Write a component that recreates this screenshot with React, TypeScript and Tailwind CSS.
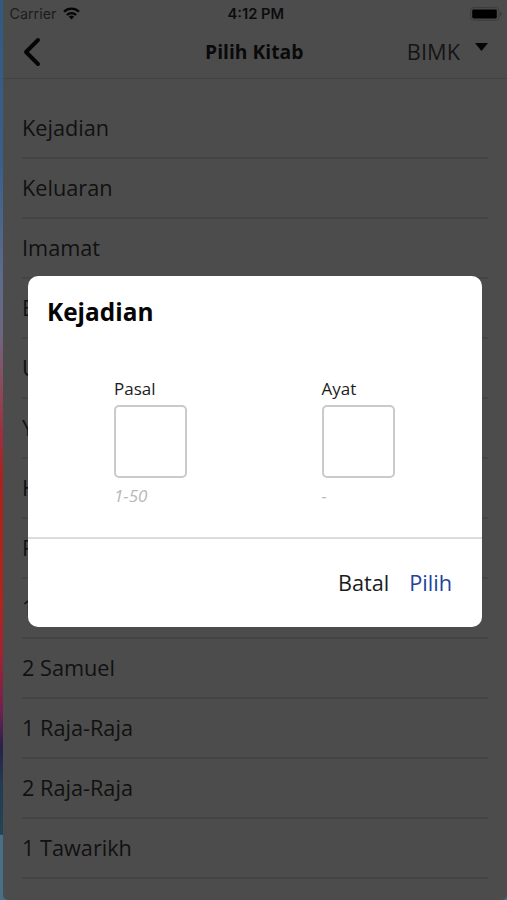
import React from "react";

const books = [
  "Kejadian",
  "Keluaran",
  "Imamat",
  "Bilangan",
  "Ulangan",
  "Yosua",
  "Hakim-Hakim",
  "Rut",
  "1 Samuel",
  "2 Samuel",
  "1 Raja-Raja",
  "2 Raja-Raja",
  "1 Tawarikh",
];

function StatusBar() {
  return (
    <div className="flex h-[27px] items-center justify-between pr-[5px] pl-[7px] font-['Inter',sans-serif] text-[14px] leading-[27px]">
      <div className="flex w-[150px] items-center gap-[7px] text-[#1c1c1c]">
        <span className="text-[14.3px]">Carrier</span>
        <svg className="mb-px" width="17" height="13" viewBox="0 0 17 13" fill="none" stroke="#050505" strokeWidth="2.3">
          <path d="M1 4.8a10.6 10.6 0 0 1 15 0" />
          <path d="M3.9 8a6.6 6.6 0 0 1 9.2 0" />
          <path d="M8.5 12.4 5.9 9.8a3.8 3.8 0 0 1 5.2 0Z" fill="#050505" stroke="none" />
        </svg>
      </div>
      <span className="pt-[2px] text-[14.7px] font-semibold text-[#0c0c0c]">4:12 PM</span>
      <div className="flex w-[150px] justify-end">
        <svg width="32" height="14" viewBox="0 0 32 14">
          <rect x="0.6" y="0.6" width="28.4" height="12.6" rx="3.4" fill="none" stroke="#3c3c3c" />
          <rect x="2.2" y="2.4" width="24.6" height="9" rx="1.4" fill="#000" />
          <path d="M30.4 5c1.5.6 1.5 3.2 0 3.8Z" fill="#2d2d2d" />
        </svg>
      </div>
    </div>
  );
}

function Header() {
  return (
    <header className="flex h-[52px] items-center justify-between border-b border-[#434343] pr-[19px] pb-[2px] pl-[18px]">
      <div className="w-[120px]">
        <svg className="mt-px" width="20" height="30" viewBox="0 0 20 30" fill="none" stroke="#050505" strokeWidth="3.9" strokeLinecap="round" strokeLinejoin="round">
          <path d="M17 3 5 15l12 12" />
        </svg>
      </div>
      <h1 className="text-[19.3px] leading-none font-bold text-[#0a0a0a]">Pilih Kitab</h1>
      <div className="flex w-[120px] items-center justify-end gap-[15px]">
        <span className="text-[21.8px] leading-none text-[#151515]">BIMK</span>
        <svg className="mb-[8px]" width="13" height="8" viewBox="0 0 13 8" fill="#050505">
          <path d="M0 0h13L6.5 8Z" />
        </svg>
      </div>
    </header>
  );
}

function NumberField({ label, hint }: { label: string; hint: string }) {
  return (
    <label className="flex w-[73px] flex-col text-[17px] leading-[24px] text-[#1c1c1c]">
      {label}
      <input className="mt-[4px] h-[73px] w-[73px] rounded-[5px] border-2 border-[#cacaca] bg-white outline-none" />
      <span className="mt-[6px] text-[#b8b8b8] italic">{hint}</span>
    </label>
  );
}

function ChapterDialog() {
  return (
    <div className="absolute inset-0 flex justify-center pt-[275.5px] pr-[25px] pl-[27.5px]">
      <div role="dialog" className="flex h-[351.5px] w-full flex-col rounded-[10px] bg-white">
        <h2 className="pt-[19.4px] pl-[19.5px] text-[24.4px] leading-[34px] font-bold text-[#050505]">
          Kejadian
        </h2>
        <div className="flex gap-[134.5px] pt-[48px] pl-[86.5px]">
          <NumberField label="Pasal" hint="1-50" />
          <NumberField label="Ayat" hint="-" />
        </div>
        <div className="mt-auto flex h-[90px] items-center justify-end gap-[20px] border-t-2 border-[#dcdcdc] pr-[30px] text-[21.7px] leading-none">
          <button className="text-[#1c1c1c]">Batal</button>
          <button className="text-[#1f429f]">Pilih</button>
        </div>
      </div>
    </div>
  );
}

export default function App() {
  return (
    <div className="relative flex h-[900px] w-[507px] overflow-hidden bg-[linear-gradient(to_bottom,#315a80_0%,#385f8a_18%,#5d6c8c_31%,#6f6680_37%,#8d4a5c_43%,#9d3040_48%,#ac211d_53%,#b3241e_67%,#a02335_73%,#702050_79%,#27204a_83%,#213c50_87%,#244454_92.7%,#477088_92.8%,#477088_100%)] font-['Open_Sans','Noto_Sans',sans-serif]">
      <div className="ml-[2.5px] flex flex-1 flex-col rounded-b-[5px] bg-[#4c4c4c]">
        <StatusBar />
        <Header />
        <ul className="mr-[19px] ml-[19.5px] pt-[20px]">
          {books.map((book) => (
            <li
              key={book}
              className="flex h-[60px] items-center border-b-2 border-[#444444] text-[21.7px] leading-none text-[#111111]"
            >
              {book}
            </li>
          ))}
        </ul>
      </div>
      <ChapterDialog />
    </div>
  );
}
